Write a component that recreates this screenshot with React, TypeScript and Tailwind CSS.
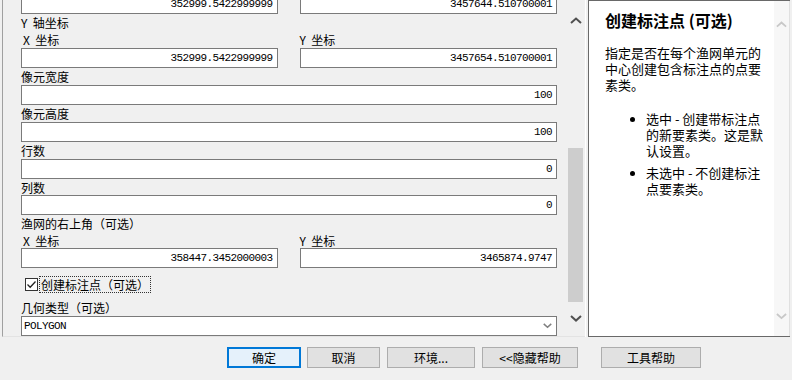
import React from "react";

const cjk = { fontFamily: '"Noto Sans CJK SC", "Noto Sans", sans-serif' };
const mono = { fontFamily: '"Liberation Mono", "Noto Sans CJK SC", monospace' };

const Label = ({ children, indent, h = "h-[17px]" }: { children: React.ReactNode; indent?: boolean; h?: string }) => (
  <div
    className={`${h} text-[12px] leading-[17px] text-black whitespace-nowrap ${indent ? "pl-[2px]" : ""}`}
    style={cjk}
  >
    {children}
  </div>
);

const Field = ({ value, className = "" }: { value: string; className?: string }) => (
  <div
    className={`h-[20px] bg-white border border-[#7a7a7a] flex items-center justify-end pr-[4px] text-[11px] tracking-[-0.6px] text-black whitespace-nowrap ${className}`}
    style={mono}
  >
    {value}
  </div>
);

const Chevron = ({ up, color = "#505050", size = 12 }: { up?: boolean; color?: string; size?: number }) => (
  <svg width={size} height={size * 0.6} viewBox="0 0 12 7">
    <path d={up ? "M1 6 L6 1.5 L11 6" : "M1 1 L6 5.5 L11 1"} fill="none" stroke={color} strokeWidth="2" />
  </svg>
);

const Btn = ({ children, w, primary }: { children: React.ReactNode; w: string; primary?: boolean }) => (
  <div
    className={`${w} h-[21px] flex items-center justify-center text-[12px] text-black whitespace-nowrap border ${
      primary ? "border-[#0078d7] bg-[#e5f1fb] border-2" : "border-[#adadad] bg-[#e1e1e1]"
    }`}
    style={cjk}
  >
    {children}
  </div>
);

const Bullet = ({ lines }: { lines: string[] }) => (
  <div className="flex">
    <div className="w-[41px] pl-[25px] pt-[6px]">
      <div className="w-[5px] h-[5px] rounded-full bg-black" />
    </div>
    <div>
      {lines.map((l) => (
        <div key={l} className="whitespace-nowrap">
          {l}
        </div>
      ))}
    </div>
  </div>
);

export default function App() {
  return (
    <div className="w-[792px] h-[380px] bg-[#f0f0f0] flex flex-col overflow-hidden">
      <div className="flex h-[337px]">
        {/* tool parameters */}
        <div className="ml-[2px] w-[583px] flex border-l border-[#a0a0a0] border-b border-b-[#e3e3e3]">
          <div className="w-[564px] overflow-hidden pl-[18px] pr-[10px]">
            <div className="-mt-[6px] flex flex-col">
              <div className="flex gap-[22px]">
                <Field value="352999.5422999999" className="w-[257px]" />
                <Field value="3457644.510700001" className="w-[258px]" />
              </div>
              <Label>Y{"\u00a0\u00a0"}轴坐标</Label>
              <div className="flex gap-[22px]">
                <div className="w-[257px]">
                  <Label indent>X{"\u00a0\u00a0"}坐标</Label>
                  <Field value="352999.5422999999" />
                </div>
                <div className="w-[258px]">
                  <Label>Y{"\u00a0\u00a0"}坐标</Label>
                  <Field value="3457654.510700001" />
                </div>
              </div>
              <Label>像元宽度</Label>
              <Field value="100" />
              <Label>像元高度</Label>
              <Field value="100" />
              <Label>行数</Label>
              <Field value="0" />
              <Label h="h-[16px]">列数</Label>
              <Field value="0" />
              <Label>渔网的右上角（可选）</Label>
              <div className="flex gap-[22px]">
                <div className="w-[257px]">
                  <Label indent h="h-[16px]">
                    X{"\u00a0\u00a0"}坐标
                  </Label>
                  <Field value="358447.3452000003" />
                </div>
                <div className="w-[258px]">
                  <Label h="h-[16px]">Y{"\u00a0\u00a0"}坐标</Label>
                  <Field value="3465874.9747" />
                </div>
              </div>
              <div className="h-[8px]" />
              <div className="flex items-center h-[16px] pl-[4px]">
                <div className="w-[13px] h-[13px] bg-white border border-[#333333] flex items-center justify-center">
                  <svg width="11" height="11" viewBox="0 0 11 11">
                    <path d="M1.5 5.5 L4.2 8.2 L9.5 2.5" fill="none" stroke="#222" strokeWidth="1.3" />
                  </svg>
                </div>
                <div
                  className="ml-[1px] h-[17px] px-[1px] border border-dotted border-[#333] text-[12px] leading-[15px] text-black whitespace-nowrap"
                  style={cjk}
                >
                  创建标注点（可选）
                </div>
              </div>
              <div className="h-[7px]" />
              <Label>几何类型（可选）</Label>
              <div className="h-[20px] bg-white border border-[#7a7a7a] flex items-center justify-between pl-[2px] pr-[4px]">
                <span className="text-[11px] tracking-[-0.6px] text-black" style={mono}>
                  POLYGON
                </span>
                <Chevron color="#808080" size={9} />
              </div>
            </div>
          </div>
          {/* scrollbar */}
          <div className="w-[17px] flex flex-col items-center">
            <div className="h-[40px] flex items-center justify-center pt-[2px]">
              <Chevron up />
            </div>
            <div className="flex-1 w-full flex flex-col px-[1px]">
              <div className="h-[108px]" />
              <div className="h-[154px] bg-[#cdcdcd]" />
            </div>
            <div className="h-[30px] flex items-start justify-center pt-[9px]">
              <Chevron />
            </div>
          </div>
        </div>
        {/* sash */}
        <div className="w-[1px] bg-white" />
        <div className="w-[2px]" />
        {/* help panel */}
        <div className="flex-1 flex bg-white border-l border-t border-b border-[#696969] mr-[2px]">
          <div className="flex-1 pl-[16px] pt-[9px]" style={cjk}>
            <div className="text-[16px] font-bold leading-[20px] text-black whitespace-nowrap">创建标注点 (可选)</div>
            <div className="mt-[15px] text-[13px] leading-[16px] text-black">
              <div className="whitespace-nowrap">指定是否在每个渔网单元的</div>
              <div className="whitespace-nowrap">中心创建包含标注点的点要</div>
              <div className="whitespace-nowrap">素类。</div>
            </div>
            <div className="mt-[18px] text-[13px] leading-[16px] text-black">
              <Bullet lines={["选中 - 创建带标注点", "的新要素类。这是默", "认设置。"]} />
              <div className="h-[6px]" />
              <Bullet lines={["未选中 - 不创建标注", "点要素类。"]} />
            </div>
          </div>
          <div className="w-[16px] bg-[#f7f7f7] flex flex-col items-center justify-between pt-[20px] pb-[16px] border-r border-[#e0e0e0]">
            <Chevron up color="#c8c8c8" size={11} />
            <Chevron color="#c8c8c8" size={11} />
          </div>
        </div>
      </div>
      {/* buttons */}
      <div className="flex pt-[10px] pl-[227px]">
        <Btn w="w-[74px]" primary>
          确定
        </Btn>
        <div className="w-[6px]" />
        <Btn w="w-[73px]">取消</Btn>
        <div className="w-[7px]" />
        <Btn w="w-[88px]">环境...</Btn>
        <div className="w-[7px]" />
        <Btn w="w-[96px]">&lt;&lt;隐藏帮助</Btn>
        <div className="w-[23px]" />
        <Btn w="w-[100px]">工具帮助</Btn>
      </div>
    </div>
  );
}
